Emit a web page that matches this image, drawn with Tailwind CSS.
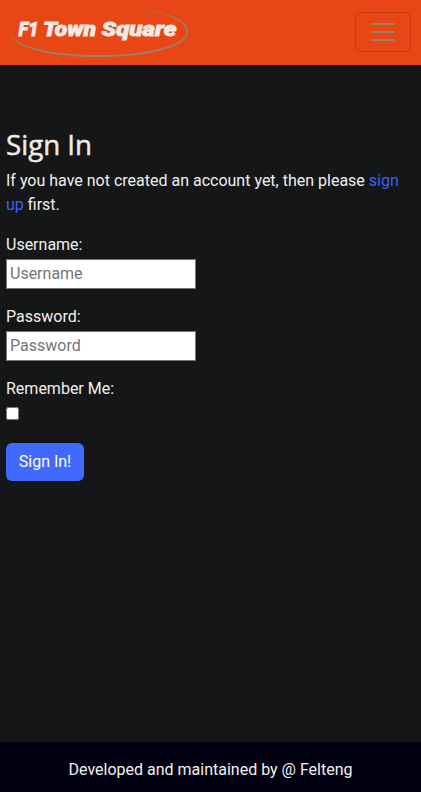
<!DOCTYPE html>
<html lang="en">
<head>
<meta charset="utf-8">
<title>Sign In</title>
<script src="https://cdn.jsdelivr.net/npm/@tailwindcss/browser@4"></script>
</head>
<body class="flex h-screen flex-col overflow-hidden bg-[#141617] font-['Roboto',sans-serif] text-base leading-6 text-[#f3f0ec]">
<nav class="flex h-[65px] shrink-0 items-start justify-between bg-[#e84614] pr-[10px]">
  <a class="block h-[65px] w-[200px]">
    <svg width="200" height="65" viewBox="0 0 200 65" fill="#928469">
      <path d="M140 10C169 12 188.200 20.500 188.200 32C188.200 46.500 151 57.100 98 57.100C49 57.100 13 47.500 9.500 33C15 46.500 51 55.100 98 55.100C149 55.100 186.300 45.500 186.300 32C186.300 21.500 168 13 140 10Z"/>
      <g fill="#f0ebe6" stroke="#f0ebe6" stroke-width=".8" class="font-['Roboto',sans-serif] text-[20px] font-black italic">
        <text x="18.500" y="36" textLength="20" lengthAdjust="spacingAndGlyphs">F1</text>
        <text x="43" y="36" textLength="53" lengthAdjust="spacingAndGlyphs">Town</text>
        <text x="101.500" y="36" textLength="75" lengthAdjust="spacingAndGlyphs">Square</text>
      </g>
    </svg>
  </a>
  <button class="mt-3 flex h-10 w-14 items-center justify-center rounded-md border border-[#c43d15]" aria-label="Menu">
    <svg width="30" height="30" viewBox="0 0 30 30" fill="none" stroke="#928469" stroke-width="2" stroke-linecap="round" stroke-miterlimit="10"><path d="M4 7h22M4 15h22M4 23h22"/></svg>
  </button>
</nav>
<main class="flex grow flex-col items-start px-1.5 pt-[58px]">
  <h1 class="mb-1 h-[42px]">
    <svg width="100" height="42" viewBox="0 -5 100 42"><text x="0" y="27" textLength="86" lengthAdjust="spacingAndGlyphs" fill="#f0ebe6" stroke="#f0ebe6" stroke-width=".5" class="font-['Open_Sans',sans-serif] text-[28px] font-medium leading-none">Sign In</text></svg>
  </h1>
  <p class="mb-4">If you have not created an account yet, then please <a class="text-[#3d63f5]">sign up</a> first.</p>
  <label class="mb-[2px]">Username:</label>
  <input type="text" placeholder="Username" class="mb-4 h-[30px] w-[190px] border border-[#767676] bg-white px-[3px] pb-[2px] text-black placeholder:text-[#757575]">
  <label class="mb-[2px]">Password:</label>
  <input type="password" placeholder="Password" class="mb-4 h-[30px] w-[190px] border border-[#767676] bg-white px-[3px] pb-[2px] text-black placeholder:text-[#757575]">
  <label class="mb-[6px]">Remember Me:</label>
  <input type="checkbox" class="mb-[23px] size-[13px]">
  <button class="h-[38px] w-[78px] rounded-md bg-[#4169ff] text-white">Sign In!</button>
</main>
<footer class="h-[50px] shrink-0 bg-[#000011] pt-4 text-center">Developed and maintained by @ Felteng</footer>
</body>
</html>
